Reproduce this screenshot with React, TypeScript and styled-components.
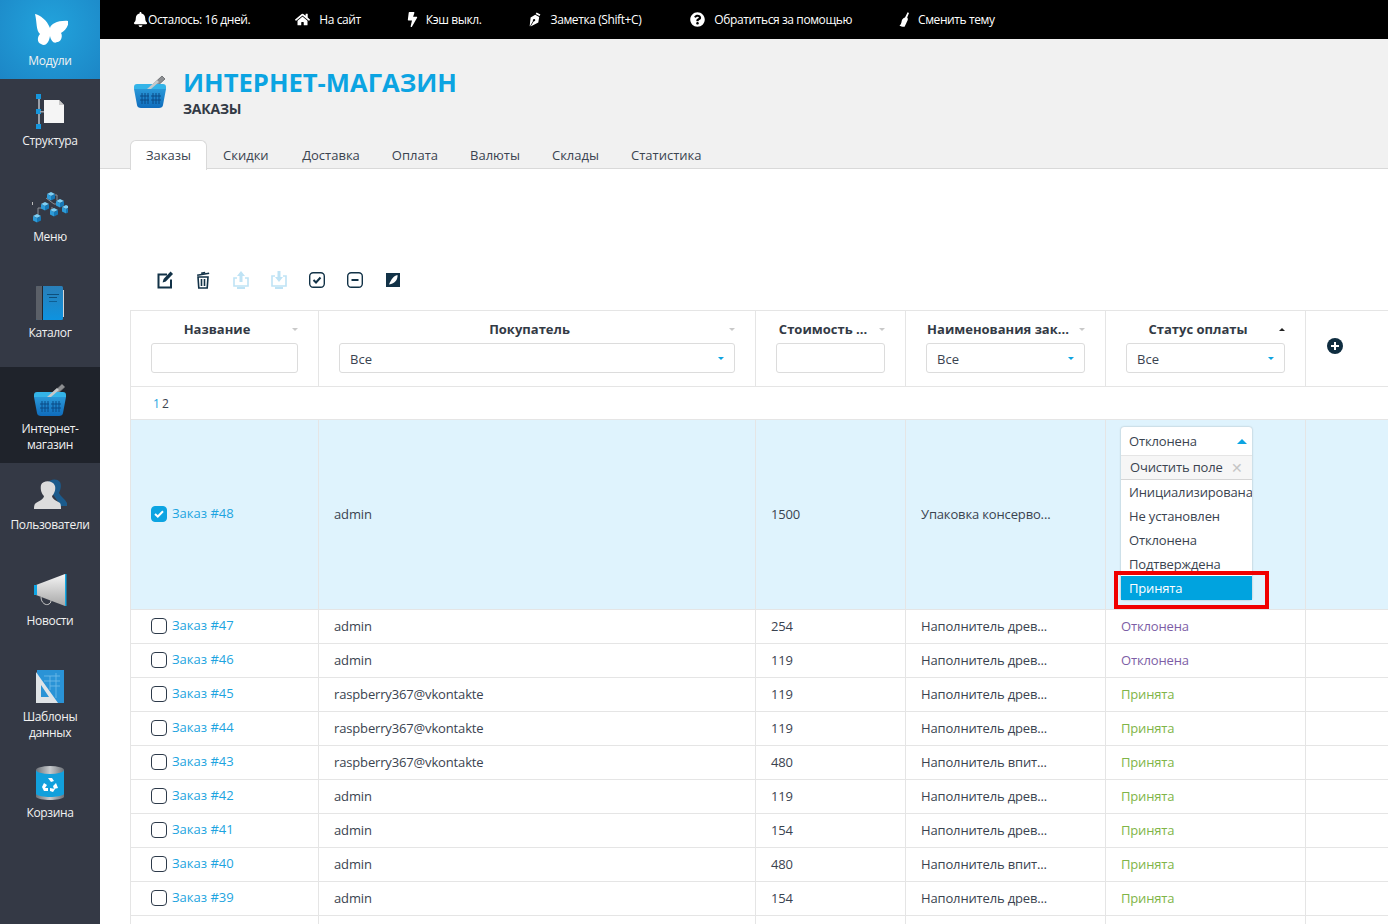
import React from 'react';
import styled, { createGlobalStyle } from 'styled-components';
import { FaBell, FaHome, FaBolt, FaQuestionCircle } from 'react-icons/fa';

const GlobalStyle = createGlobalStyle`
  html, body { margin: 0; padding: 0; height: 100%; overflow: hidden; background: #fff; }
  body { font-family: "Open Sans", "Liberation Sans", sans-serif; font-size: 13px; color: #3a4350; }
`;

const Page = styled.div`
  display: flex;
  height: 924px;
  overflow: hidden;
`;

/* sidebar */
const Sidebar = styled.nav`
  width: 100px;
  flex: none;
  background: #343945;
`;
const NavItem = styled.div<{ $state?: 'top' | 'current' }>`
  height: ${(p) => (p.$state === 'top' ? 79 : 96)}px;
  box-sizing: border-box;
  padding-top: ${(p) => (p.$state === 'top' ? 13 : 14)}px;
  display: flex;
  flex-direction: column;
  align-items: center;
  background: ${(p) =>
    p.$state === 'top'
      ? 'radial-gradient(circle at 50% 35%, #22a3dc 0%, #1c86c6 100%)'
      : p.$state === 'current'
        ? '#1f232b'
        : 'transparent'};
`;
const NavIcon = styled.div`
  height: 36px;
  display: flex;
  align-items: center;
  justify-content: center;
`;
const NavLabel = styled.span`
  margin-top: 4px;
  color: #f2f2f2;
  font-size: 12px;
  letter-spacing: -0.35px;
  line-height: 16px;
  text-align: center;
  white-space: pre-line;
`;

/* top bar */
const Main = styled.div`
  flex: 1;
  min-width: 0;
  display: flex;
  flex-direction: column;
`;
const TopBar = styled.div`
  height: 39px;
  flex: none;
  background: #000;
  display: flex;
  align-items: center;
  padding-left: 33px;
  color: #fff;
  font-size: 12px;
  letter-spacing: -0.4px;
`;
const TopLink = styled.div<{ $gap: number; $after: number }>`
  display: flex;
  align-items: center;
  gap: ${(p) => p.$gap}px;
  margin-right: ${(p) => p.$after}px;
  white-space: nowrap;
  svg { flex: none; }
`;

/* title */
const Header = styled.header`
  height: 130px;
  flex: none;
  box-sizing: border-box;
  background: #f1f1f1;
  border-bottom: 1px solid #d9d9d9;
  padding-left: 30px;
  display: flex;
  flex-direction: column;
`;
const TitleRow = styled.div`
  display: flex;
  align-items: center;
  gap: 16px;
  padding: 31px 0 0 3px;
  height: 74px;
  box-sizing: border-box;
`;
const TitleText = styled.div`
  display: flex;
  flex-direction: column;
`;
const Title = styled.h1`
  margin: 0;
  font-size: 25.6px;
  line-height: 34px;
  font-weight: 700;
  color: #0ca4e2;
`;
const Subtitle = styled.div`
  font-size: 14px;
  letter-spacing: -0.2px;
  line-height: 18px;
  font-weight: 700;
  color: #333a45;
`;
const Tabs = styled.div`
  display: flex;
  margin-top: 27px;
`;
const Tab = styled.div<{ $active?: boolean }>`
  height: 29px;
  box-sizing: border-box;
  padding: 0 ${(p) => (p.$active ? 15 : 16)}px;
  line-height: 30px;
  font-size: 13px;
  color: #3a4350;
  &:nth-child(2) { padding-right: 17.5px; }
  ${(p) =>
    p.$active
      ? `background:#fff;border:1px solid #d9d9d9;border-bottom:none;border-radius:6px 6px 0 0;height:30px;line-height:28px;`
      : ''}
`;

/* content */
const Content = styled.main`
  flex: 1;
  padding-left: 30px;
  overflow: hidden;
`;
const Toolbar = styled.div`
  height: 141px;
  box-sizing: border-box;
  padding: 101px 0 0 26px;
  display: flex;
  align-items: flex-start;
  gap: 20px;
  color: #123247;
`;
const ToolIcon = styled.svg<{ $faded?: boolean }>`
  width: 18px;
  height: 20px;
  flex: none;
  color: ${(p) => (p.$faded ? '#bfe3f5' : '#123247')};
`;

const Table = styled.div`
  border-left: 1px solid #e5e5e5;
  border-top: 1px solid #e5e5e5;
`;
const Row = styled.div<{ $selected?: boolean }>`
  display: grid;
  grid-template-columns: 188px 437px 150px 200px 200px 1fr;
  border-bottom: 1px solid #e5e5e5;
  background: ${(p) => (p.$selected ? '#dff3fd' : '#fff')};
`;
const HeadCell = styled.div`
  height: 75px;
  box-sizing: border-box;
  padding: 10px 20px 0;
  border-right: 1px solid #e5e5e5;
  position: relative;
`;
const HeadTitle = styled.div`
  height: 22px;
  line-height: 17px;
  padding-right: 15px;
  text-align: center;
  font-size: 13px;
  font-weight: 700;
  color: #333a45;
  white-space: nowrap;
`;
const SortMark = styled.span<{ $up?: boolean }>`
  position: absolute;
  top: 17px;
  right: 20px;
  border-left: 3px solid transparent;
  border-right: 3px solid transparent;
  ${(p) => (p.$up ? 'border-bottom: 3px solid #222;' : 'border-top: 3px solid #c9c9c9;')}
`;
const Field = styled.div`
  height: 30px;
  box-sizing: border-box;
  border: 1px solid #dcdcdc;
  border-radius: 3px;
  background: #fff;
  padding: 1px 10px 0;
  font-size: 13px;
  display: flex;
  align-items: center;
  justify-content: space-between;
`;
const BlueCaret = styled.span`
  border-left: 3px solid transparent;
  border-right: 3px solid transparent;
  border-top: 3px solid #0ca4e2;
`;
const AddCell = styled.div`
  padding: 27px 0 0 21px;
`;
const Pager = styled.div`
  height: 32px;
  line-height: 34px;
  padding-left: 22px;
  border-bottom: 1px solid #e5e5e5;
  font-size: 12px;
  a { color: #1ca4e0; margin-right: 2px; }
`;
const Cell = styled.div`
  min-height: 33px;
  box-sizing: border-box;
  padding: 0 15px 2px;
  border-right: 1px solid #e5e5e5;
  display: flex;
  align-items: center;
  font-size: 13px;
  letter-spacing: -0.15px;
  white-space: nowrap;
  color: #3a4350;
`;
const NameCell = styled(Cell)`
  padding: 0 15px 2px 20px;
  gap: 5px;
  letter-spacing: 0;
`;
const OrderLink = styled.a`
  color: #1ca4e0;
  margin-top: -1px;
`;
const Check = styled.span<{ $on?: boolean }>`
  width: 16px;
  height: 16px;
  box-sizing: border-box;
  border: 1.5px solid ${(p) => (p.$on ? '#0ca4e2' : '#2d3a4a')};
  border-radius: 4px;
  background: ${(p) => (p.$on ? '#0ca4e2' : '#fff')};
  display: flex;
  align-items: center;
  justify-content: center;
`;
const Status = styled.span<{ $tone: 'declined' | 'accepted' }>`
  color: ${(p) => (p.$tone === 'declined' ? '#7d5ea6' : '#80b548')};
`;

/* opened status select */
const DropCell = styled(Cell)`
  display: block;
  padding: 7px 0 9px 15px;
  position: relative;
`;
const Drop = styled.div`
  width: 131px;
  box-sizing: border-box;
  background: #fff;
  border-radius: 3px;
  box-shadow: 0 0 2px rgba(0, 0, 0, 0.3);
`;
const DropHead = styled.div`
  height: 28px;
  padding: 0 5px 0 8px;
  display: flex;
  align-items: center;
  justify-content: space-between;
`;
const DropCaret = styled.span`
  border-left: 5px solid transparent;
  border-right: 5px solid transparent;
  border-bottom: 5px solid #0ca4e2;
`;
const DropClear = styled.div`
  height: 22px;
  padding: 0 9px 1px;
  display: flex;
  align-items: center;
  justify-content: space-between;
  background: #f6f6f6;
  border-top: 1px solid #e5e5e5;
  border-bottom: 1px solid #d5d5d5;
  span:last-child { color: #c5c5c5; font-size: 14px; }
`;
const DropOption = styled.div<{ $hover?: boolean }>`
  height: 24px;
  line-height: 24px;
  padding-left: 8px;
  overflow: hidden;
  background: ${(p) => (p.$hover ? '#00a3df' : 'transparent')};
  color: ${(p) => (p.$hover ? '#fff' : '#3a4350')};
`;
const RedMark = styled.div`
  position: absolute;
  left: 8px;
  bottom: 0;
  width: 155px;
  height: 38px;
  box-sizing: border-box;
  border: 4px solid #f00000;
`;

/* top bar glyphs that the icon packs draw too differently */
const PenIcon = ({ size }: { size: number }) => (
  <svg width={size} height={size} viewBox="2 0 15 15">
    <path fill="currentColor" d="M9.6 0.4L13.4 2.4L12.5 4L8.7 2ZM8.2 2.8L12.2 5L11.3 10.5L3.6 14.6L6.6 9.4C7.3 9.6 8 9.2 8.2 8.6C8.4 7.9 8 7.3 7.4 7.1C6.8 6.9 6.1 7.3 5.9 7.9C5.8 8.3 5.8 8.7 6 9L3 14.2L2.7 14L3.6 5.6Z" />
  </svg>
);
const BrushIcon = ({ size }: { size: number }) => (
  <svg width={size} height={size} viewBox="0 0 15 15">
    <path fill="currentColor" d="M11.6 0.2L13 1L11.2 5.4C12 6.2 12 7.6 11.4 8.8C10.6 10.6 9.8 12.4 8.6 14.8C7 15 4.6 14.4 3.4 13.6C4.6 12.8 5.4 11.2 5.6 9.4C5.8 7.6 7.2 6 9 5.6Z" />
  </svg>
);
const EditIcon = () => (
  <ToolIcon viewBox="0 0 18 20">
    <path fill="none" stroke="currentColor" strokeWidth="2" d="M11 4.5H2.5V17.5H15V9.5" />
    <path fill="currentColor" d="M14.6 1.6L17 4L9.8 11.4L6.6 12.6L7.6 9Z" />
  </ToolIcon>
);

/* icons drawn for the side menu */
const Butterfly = () => (
  <svg width="36" height="34" viewBox="-2 0 36 34">
    <path fill="#fff" d="M1 0C6 1 13 6 16 14C17 10 24 6 35 7C34 13 31 17 27 19C29 22 27 28 23 28C20 30 17 27 16 22C15 28 12 33 7 30C3 29 3 23 6 20C2 17 3 8 1 0Z" />
  </svg>
);
const StructureIcon = () => (
  <svg width="30" height="37" viewBox="0 0 30 37">
    <rect x="3" y="2" width="2" height="33" fill="#9aa0a8" />
    <rect x="1" y="1" width="5" height="5" fill="#1696dc" />
    <rect x="1" y="16" width="5" height="5" fill="#1696dc" />
    <rect x="1" y="31" width="5" height="5" fill="#1696dc" />
    <rect x="5" y="18" width="5" height="1.5" fill="#9aa0a8" />
    <path fill="#f5f5f5" d="M9 7H24L29 12V30H9Z" />
    <path fill="#c8c8c8" d="M24 7L29 12H24Z" />
  </svg>
);
const Cube = ({ x, y }: { x: number; y: number }) => (
  <g transform={`translate(${x} ${y})`}>
    <path fill="#7fd0f5" d="M0 2L4 0L8 2L4 4Z" />
    <path fill="#2d9bd8" d="M0 2L4 4V8.5L0 6.5Z" />
    <path fill="#1678b6" d="M8 2L4 4V8.5L8 6.5Z" />
  </g>
);
const MenuIcon = () => (
  <svg width="36" height="34" viewBox="0 0 36 34">
    <path fill="none" stroke="#8c9096" d="M6 26V18H12M14 8L22 14H31M18 5H25V10M12 14V16M20 17V22" />
    <Cube x="15" y="2" />
    <Cube x="24" y="9" />
    <Cube x="9" y="12" />
    <Cube x="30" y="15" />
    <Cube x="18" y="18" />
    <Cube x="1" y="24" />
    <rect x="0" y="12" width="1" height="3" fill="#bbb" />
  </svg>
);
const BookIcon = () => (
  <svg width="32" height="36" viewBox="0 0 32 36">
    <defs>
      <linearGradient id="bookFill" x1="0" y1="0" x2="0" y2="1">
        <stop offset="0" stopColor="#2a7fb8" />
        <stop offset="1" stopColor="#0d93e0" />
      </linearGradient>
    </defs>
    <rect x="27" y="5" width="3" height="27" fill="#d7d7d7" />
    <rect x="2" y="1" width="27" height="34" rx="1.5" fill="url(#bookFill)" />
    <rect x="2" y="1" width="6" height="34" rx="1" fill="#5b6068" />
    <rect x="8" y="1" width="1" height="34" fill="#23272e" />
    <rect x="13" y="9" width="12" height="1" fill="#0e4f7c" />
    <rect x="15" y="12" width="8" height="1" fill="#0e4f7c" />
    <rect x="15" y="16" width="8" height="1" fill="#0e5f94" />
  </svg>
);
const BasketIcon = () => (
  <svg width="34" height="35" viewBox="0 0 34 35">
    <defs>
      <linearGradient id="basketFill" x1="0" y1="0" x2="0" y2="1">
        <stop offset="0" stopColor="#2a98d8" />
        <stop offset="1" stopColor="#0f6cbc" />
      </linearGradient>
    </defs>
    <path d="M16 14L29 2L32 5L21 15Z" fill="#8d8f92" stroke="#55585c" strokeWidth="0.7" />
    <path d="M1 13C1 11 2 10 4 10H30C32 10 33 11 33 13V15H1Z" fill="#34b4e8" />
    <path d="M1 15H33L30 31C30 33 28 34 26 34H8C6 34 4 33 4 31Z" fill="url(#basketFill)" />
    <path d="M9 19V30M12 19V30M15 19V30M20 19V30M23 19V30M26 19V30M7 22H16M18 22H28M7 26H16M18 26H28" stroke="#0a4a86" strokeWidth="1" fill="none" />
    <path d="M14 15L24 6L26 8L18 15Z" fill="#c6c8ca" />
  </svg>
);
const UserIcon = () => (
  <svg width="34" height="34" viewBox="0 0 34 34">
    <path fill="#1b5b8c" d="M14 6C16 1 24 0 27 4C29 8 27 13 26 15C28 19 32 21 34 25V28H27C24 20 18 16 14 6Z" />
    <path fill="#dcdcdc" d="M8 7C10 2 20 2 22 8C23 12 21 16 19 18C19 21 24 23 27 25C28 26 28 30 28 31H1C1 29 1 26 3 25C6 23 11 21 11 18C9 16 7 12 8 7Z" />
  </svg>
);
const MegaphoneIcon = () => (
  <svg width="34" height="36" viewBox="0 0 34 36">
    <defs>
      <linearGradient id="hornFill" x1="0" y1="0" x2="0" y2="1">
        <stop offset="0" stopColor="#f5f5f5" />
        <stop offset="1" stopColor="#a8a8a8" />
      </linearGradient>
    </defs>
    <path d="M8 24C8 30 13 33 16 31C18 30 18 28 18 27" fill="none" stroke="#c9c9c9" />
    <path d="M3 12L32 1V33L3 22Z" fill="url(#hornFill)" />
    <rect x="1" y="12" width="3" height="10" fill="#0ea5e4" />
    <rect x="32" y="1" width="1.5" height="32" fill="#12a8e4" />
  </svg>
);
const BlueprintIcon = () => (
  <svg width="28" height="34" viewBox="0 0 28 34">
    <rect x="1" y="0" width="27" height="33" fill="#2a93d6" />
    <path d="M8 6H24M8 11H24M14 16H24M20 3V28M14 6V20" stroke="#73bcea" strokeWidth="0.8" fill="none" />
    <path d="M0 2L22 33H0ZM5 15V27H13Z" fill="#dfe3e6" fillRule="evenodd" />
  </svg>
);
const TrashIcon = () => (
  <svg width="30" height="36" viewBox="0 0 30 36">
    <defs>
      <linearGradient id="binRim" x1="0" y1="0" x2="1" y2="0">
        <stop offset="0" stopColor="#6d7278" />
        <stop offset="0.5" stopColor="#c8cbce" />
        <stop offset="1" stopColor="#6d7278" />
      </linearGradient>
    </defs>
    <rect x="1" y="5" width="28" height="27" fill="#12a0dc" />
    <ellipse cx="15" cy="5" rx="14" ry="4" fill="url(#binRim)" />
    <path d="M1 29C4 33 26 33 29 29V32C26 36 4 36 1 32Z" fill="url(#binRim)" />
    <path d="M13 13L17 13L19 16L16 17ZM21 18L23 23L19 24L18 21ZM9 18L12 20L10 23L13 23V26L9 26L7 22Z" fill="#fff" />
    <path d="M15 26V23L20 24L18 27Z" fill="#fff" />
  </svg>
);

const navItems: { label: string; icon: React.ReactNode; state?: 'top' | 'current' }[] = [
  { label: 'Модули', icon: <Butterfly />, state: 'top' },
  { label: 'Структура', icon: <StructureIcon /> },
  { label: 'Меню', icon: <MenuIcon /> },
  { label: 'Каталог', icon: <BookIcon /> },
  { label: 'Интернет-\nмагазин', icon: <BasketIcon />, state: 'current' },
  { label: 'Пользователи', icon: <UserIcon /> },
  { label: 'Новости', icon: <MegaphoneIcon /> },
  { label: 'Шаблоны\nданных', icon: <BlueprintIcon /> },
  { label: 'Корзина', icon: <TrashIcon /> },
];

const topLinks = [
  { text: 'Осталось: 16 дней.', Icon: FaBell, gap: 0, after: 45 },
  { text: 'На сайт', Icon: FaHome, gap: 9, after: 44 },
  { text: 'Кэш выкл.', Icon: FaBolt, gap: 6, after: 47 },
  { text: 'Заметка (Shift+C)', Icon: PenIcon, gap: 7, after: 49 },
  { text: 'Обратиться за помощью', Icon: FaQuestionCircle, gap: 9, after: 44 },
  { text: 'Сменить тему', Icon: BrushIcon, gap: 7, after: 0 },
];

const tabs = ['Заказы', 'Скидки', 'Доставка', 'Оплата', 'Валюты', 'Склады', 'Статистика'];

const wood = 'Наполнитель древ...';
const absorb = 'Наполнитель впит...';
const vk = 'raspberry367@vkontakte';
const orders: { id: number; buyer: string; cost: string; goods: string; ok: boolean }[] = [
  { id: 47, buyer: 'admin', cost: '254', goods: wood, ok: false },
  { id: 46, buyer: 'admin', cost: '119', goods: wood, ok: false },
  { id: 45, buyer: vk, cost: '119', goods: wood, ok: true },
  { id: 44, buyer: vk, cost: '119', goods: wood, ok: true },
  { id: 43, buyer: vk, cost: '480', goods: absorb, ok: true },
  { id: 42, buyer: 'admin', cost: '119', goods: wood, ok: true },
  { id: 41, buyer: 'admin', cost: '154', goods: wood, ok: true },
  { id: 40, buyer: 'admin', cost: '480', goods: absorb, ok: true },
  { id: 39, buyer: 'admin', cost: '154', goods: wood, ok: true },
];

const ToolButtons = () => (
  <>
    <EditIcon />
    <ToolIcon viewBox="0 0 18 20">
      <path fill="currentColor" d="M3 4.5L15 2.5L15.3 4L3.3 6ZM7 2.5L11 1.8L11.3 3L7.3 3.7Z" />
      <path fill="none" stroke="currentColor" strokeWidth="1.6" d="M4 7H14L13.2 18H4.8ZM7.5 9V16M10.5 9V16" />
    </ToolIcon>
    <ToolIcon $faded viewBox="0 0 18 20">
      <path fill="currentColor" d="M9 1L13 6H10.5V12H7.5V6H5Z" />
      <path fill="none" stroke="currentColor" strokeWidth="1.6" d="M5 8H2V16H16V8H13" />
      <rect x="5" y="17" width="8" height="2" fill="currentColor" />
    </ToolIcon>
    <ToolIcon $faded viewBox="0 0 18 20">
      <path fill="currentColor" d="M9 12L5 7H7.5V1H10.5V7H13Z" />
      <path fill="none" stroke="currentColor" strokeWidth="1.6" d="M5 6H2V16H16V6H13" />
      <rect x="5" y="17" width="8" height="2" fill="currentColor" />
    </ToolIcon>
    <ToolIcon viewBox="0 0 18 20">
      <rect x="1.7" y="2.7" width="14.6" height="14.6" rx="3.5" fill="none" stroke="currentColor" strokeWidth="1.4" />
      <path fill="none" stroke="currentColor" strokeWidth="2" d="M5.5 10L8 12.5L12.5 7.5" />
    </ToolIcon>
    <ToolIcon viewBox="0 0 18 20">
      <rect x="1.7" y="2.7" width="14.6" height="14.6" rx="3.5" fill="none" stroke="currentColor" strokeWidth="1.4" />
      <rect x="5.5" y="9" width="7" height="2" fill="currentColor" />
    </ToolIcon>
    <ToolIcon viewBox="0 0 18 20">
      <rect x="2" y="3" width="14" height="14" fill="currentColor" />
      <path fill="#fff" d="M13.5 5C14 9 11 14 5 14.5C7 10 9 6 13.5 5Z" />
    </ToolIcon>
  </>
);

const CheckMark = () => (
  <svg width="10" height="8" viewBox="0 0 10 8">
    <path d="M1 4L3.8 6.5L9 1.3" fill="none" stroke="#fff" strokeWidth="2" />
  </svg>
);

const PlusIcon = () => (
  <svg width="16" height="16" viewBox="0 0 16 16">
    <circle cx="8" cy="8" r="8" fill="#0f2d40" />
    <path d="M8 4V12M4 8H12" stroke="#fff" strokeWidth="2" />
  </svg>
);

export default function App() {
  return (
    <Page>
      <GlobalStyle />
      <Sidebar>
        {navItems.map((item) => (
          <NavItem key={item.label} $state={item.state}>
            <NavIcon>{item.icon}</NavIcon>
            <NavLabel>{item.label}</NavLabel>
          </NavItem>
        ))}
      </Sidebar>
      <Main>
        <TopBar>
          {topLinks.map(({ text, Icon, gap, after }) => (
            <TopLink key={text} $gap={gap} $after={after}>
              <Icon size={15} />
              <span>{text}</span>
            </TopLink>
          ))}
        </TopBar>
        <Header>
          <TitleRow>
            <BasketIcon />
            <TitleText>
              <Title>ИНТЕРНЕТ-МАГАЗИН</Title>
              <Subtitle>ЗАКАЗЫ</Subtitle>
            </TitleText>
          </TitleRow>
          <Tabs>
            {tabs.map((tab, i) => (
              <Tab key={tab} $active={i === 0}>{tab}</Tab>
            ))}
          </Tabs>
        </Header>
        <Content>
          <Toolbar>
            <ToolButtons />
          </Toolbar>
          <Table>
            <Row>
              <HeadCell>
                <HeadTitle>Название</HeadTitle>
                <SortMark />
                <Field />
              </HeadCell>
              <HeadCell>
                <HeadTitle>Покупатель</HeadTitle>
                <SortMark />
                <Field>Все<BlueCaret /></Field>
              </HeadCell>
              <HeadCell>
                <HeadTitle>Стоимость ...</HeadTitle>
                <SortMark />
                <Field />
              </HeadCell>
              <HeadCell>
                <HeadTitle>Наименования зак...</HeadTitle>
                <SortMark />
                <Field>Все<BlueCaret /></Field>
              </HeadCell>
              <HeadCell>
                <HeadTitle>Статус оплаты</HeadTitle>
                <SortMark $up />
                <Field>Все<BlueCaret /></Field>
              </HeadCell>
              <AddCell><PlusIcon /></AddCell>
            </Row>
            <Pager><a>1</a>2</Pager>
            <Row $selected>
              <NameCell>
                <Check $on><CheckMark /></Check>
                <OrderLink>Заказ #48</OrderLink>
              </NameCell>
              <Cell>admin</Cell>
              <Cell>1500</Cell>
              <Cell>Упаковка консерво...</Cell>
              <DropCell>
                <Drop>
                  <DropHead>Отклонена<DropCaret /></DropHead>
                  <DropClear><span>Очистить поле</span><span>✕</span></DropClear>
                  <DropOption>Инициализирована</DropOption>
                  <DropOption>Не установлен</DropOption>
                  <DropOption>Отклонена</DropOption>
                  <DropOption>Подтверждена</DropOption>
                  <DropOption $hover>Принята</DropOption>
                </Drop>
                <RedMark />
              </DropCell>
              <div />
            </Row>
            {orders.map((o) => (
              <Row key={o.id}>
                <NameCell>
                  <Check />
                  <OrderLink>Заказ #{o.id}</OrderLink>
                </NameCell>
                <Cell>{o.buyer}</Cell>
                <Cell>{o.cost}</Cell>
                <Cell>{o.goods}</Cell>
                <Cell>
                  <Status $tone={o.ok ? 'accepted' : 'declined'}>{o.ok ? 'Принята' : 'Отклонена'}</Status>
                </Cell>
                <div />
              </Row>
            ))}
            <Row>
              <NameCell />
              <Cell />
              <Cell />
              <Cell />
              <Cell />
              <div />
            </Row>
          </Table>
        </Content>
      </Main>
    </Page>
  );
}
